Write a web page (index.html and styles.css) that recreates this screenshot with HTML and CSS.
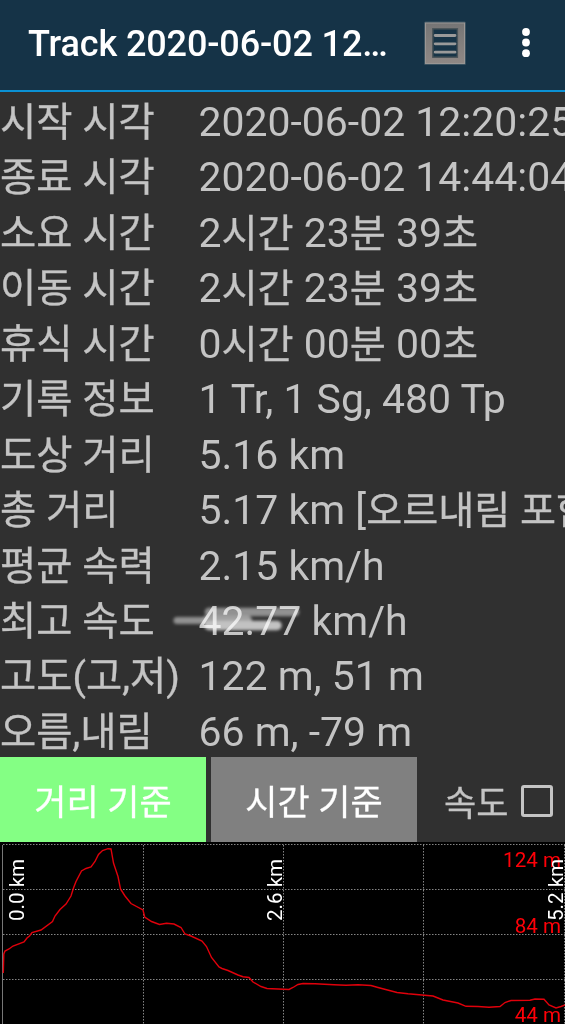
FILE: index.html
```
<!DOCTYPE html>
<html lang="ko">
<head>
  <meta charset="UTF-8">
  <meta name="viewport" content="width=device-width, initial-scale=1.0">
  <title>Track 2020-06-02</title>
  <link rel="stylesheet" href="styles.css">
</head>
<body>
  <header class="app-bar">
    <h1 class="title">Track 2020-06-02 12…</h1>
    <svg class="list-icon" width="46" height="48" viewBox="0 0 46 48">
      <defs>
        <linearGradient id="metal" x1="0" y1="0" x2="0" y2="1">
          <stop offset="0" stop-color="#757575"/>
          <stop offset="1" stop-color="#8f8885"/>
        </linearGradient>
      </defs>
      <rect x="2" y="2.5" width="42" height="43.5" rx="1.5" fill="#62737c" opacity=".5"/>
      <rect x="3.5" y="4" width="39" height="40.5" fill="url(#metal)" stroke="#9a9694"/>
      <rect x="10.8" y="9.8" width="24.6" height="28.4" fill="#173447" stroke="#4a5459" stroke-width="1.4"/>
      <path d="M13.2 16.5h19.8M13.2 24.8h19.8M13.2 33.2h19.8" stroke="#9a9a9a" stroke-width="2.8" stroke-linecap="round"/>
    </svg>
    <svg class="more-icon" width="10" height="32" viewBox="0 0 10 32">
      <circle cx="5" cy="5" r="3.9"/>
      <circle cx="5" cy="15.5" r="3.9"/>
      <circle cx="5" cy="26.2" r="3.9"/>
    </svg>
  </header>

  <main>
    <dl class="stats">
      <div class="row"><dt>시작 시각</dt><dd>2020-06-02 12:20:25</dd></div>
      <div class="row"><dt>종료 시각</dt><dd>2020-06-02 14:44:04</dd></div>
      <div class="row"><dt>소요 시간</dt><dd>2<i>시간</i> 23<i>분</i> 39<i>초</i></dd></div>
      <div class="row"><dt>이동 시간</dt><dd>2<i>시간</i> 23<i>분</i> 39<i>초</i></dd></div>
      <div class="row"><dt>휴식 시간</dt><dd>0<i>시간</i> 00<i>분</i> 00<i>초</i></dd></div>
      <div class="row"><dt>기록 정보</dt><dd>1 Tr, 1 Sg, 480 Tp</dd></div>
      <div class="row"><dt>도상 거리</dt><dd>5.16 km</dd></div>
      <div class="row"><dt>총 거리</dt><dd>5.17 km [<i>오르내림 포함</i>]</dd></div>
      <div class="row"><dt>평균 속력</dt><dd>2.15 km/h</dd></div>
      <div class="row"><dt>최고 속도</dt><dd class="struck">42.77 km/h
        <svg class="smudge" width="140" height="40" viewBox="0 0 140 40">
          <g stroke-linecap="round">
            <path d="M8 14.5H40" stroke="#777" stroke-width="7"/>
            <path d="M40 6H126" stroke="#777" stroke-width="8.5"/>
            <path d="M38 14.5H78" stroke="#8c8c8c" stroke-width="10"/>
            <path d="M40 19.5H108" stroke="#b4b4b4" stroke-width="9.5"/>
          </g>
        </svg>
      </dd></div>
      <div class="row"><dt>고도(고,저)</dt><dd>122 m, 51 m</dd></div>
      <div class="row"><dt>오름,내림</dt><dd>66 m, -79 m</dd></div>
    </dl>

    <div class="controls">
      <button class="mode active">거리 기준</button>
      <button class="mode">시간 기준</button>
      <div class="speed">
        <span>속도</span>
        <span class="checkbox"></span>
      </div>
    </div>

    <svg class="chart" width="565" height="182" viewBox="0 0 565 182">
      <path class="axis" d="M2.5 3V182"/>
      <path class="grid" d="M3 2.5H565M3 47.5H565M3 92.5H565M3 137.5H565"/>
      <path class="grid" d="M143.5 3V182M283.5 3V182M423.5 3V182M564.5 3V182"/>
      <polyline class="altitude" points="3.3,131 3.8,112 5,109 9,107 13,104 24,100 27,96 29.5,94 32,90.5 41,88 52.5,79.5 55,74 60,67.5 66,62 71,54 73.5,46 76,39.5 81.5,29 86,26.5 91,25 95,19.5 98.5,12.5 102.5,8.5 108,6.7 111,7 113.5,21 118,34.5 120.5,47 125,54 131,61.5 143,68 144.7,75 151.5,79.5 159.5,82.5 166.5,81.3 174,82 181,85.5 185,92 191,94 202,99 206.5,104.5 211.5,115.5 219,125 222,126.5 228,128.5 238,133 243,134.7 249,135.5 253,140 261,144.5 267,146.5 289,147.5 293,145.5 298,142.5 303,141.5 315,141.8 334,142.8 346,143.3 358,142.8 371,143.5 378,145.5 397,150.5 408,151.8 433,154 443,158 458,161 466,164.3 478,164.5 489,165.2 500,164.5 505,160.5 511,158.5 530,158.3 535,157 544,157.3 549,163 556,166 561,164.5 565,163"/>
      <g class="height-labels">
        <text x="561" y="24.7">124 m</text>
        <text x="561" y="91.4">84 m</text>
        <text x="561" y="179.7">44 m</text>
      </g>
      <g class="distance-labels">
        <text transform="translate(23.7 79) rotate(-90)">0.0 km</text>
        <text transform="translate(282 79) rotate(-90)">2.6 km</text>
        <text transform="translate(563 79) rotate(-90)">5.2 km</text>
      </g>
    </svg>
  </main>
</body>
</html>
```
FILE: styles.css
```
* {
  margin: 0;
  padding: 0;
  box-sizing: border-box;
}

body {
  width: 565px;
  height: 1024px;
  overflow: hidden;
  background: #303030;
  color: #c4c4c4;
  font-family: Roboto, "Noto Sans CJK KR", sans-serif;
}

.app-bar {
  display: flex;
  align-items: center;
  height: 92px;
  padding: 0 34px 5px 28px;
  background: #153347;
  border-bottom: 2px solid #0b91d4;
}

.title {
  width: 394px;
  padding-top: 3px;
  color: white;
  font-size: 36px;
  font-weight: 500;
  letter-spacing: -0.13px;
  white-space: nowrap;
}

.more-icon {
  margin-left: auto;
  fill: white;
}

.stats {
  height: 665px;
  overflow: hidden;
  font-size: 40.95px;
}

.row {
  display: flex;
  align-items: baseline;
  height: 55.45px;
  padding-top: 3px;
  line-height: 55px;
  white-space: nowrap;
}

.row dt {
  flex: none;
  width: 198.5px;
  font-size: 39.4px;
  -webkit-text-stroke: 0.3px #c4c4c4;
}

.row i {
  font-size: 39.2px;
  font-style: normal;
  -webkit-text-stroke: 0.3px #c4c4c4;
}

.struck {
  position: relative;
}

.smudge {
  position: absolute;
  left: -30px;
  top: 12px;
  filter: blur(1.8px);
  mix-blend-mode: screen;
}

.controls {
  display: flex;
  gap: 5px;
  height: 85px;
}

.mode {
  width: 206px;
  border: none;
  background: #808080;
  color: white;
  font-family: inherit;
  font-size: 35px;
  -webkit-text-stroke: 0.3px white;
}

.mode.active {
  background: #84ff84;
}

.speed {
  display: flex;
  align-items: center;
  gap: 13px;
  margin-left: 22px;
  padding-top: 2px;
  font-size: 35px;
  -webkit-text-stroke: 0.3px #c4c4c4;
}

.checkbox {
  width: 32px;
  height: 32px;
  border: 3px solid #c4c4c4;
  border-radius: 3px;
}

.chart {
  display: block;
  background: black;
  font-size: 20.6px;
}

.axis {
  stroke: #777;
}

.grid {
  stroke: #858585;
  stroke-dasharray: 1.5 1.5;
}

.altitude {
  fill: none;
  stroke: #e0000b;
  stroke-width: 1.4;
}

.height-labels {
  fill: #ff0008;
  text-anchor: end;
}

.distance-labels {
  fill: white;
}
```
